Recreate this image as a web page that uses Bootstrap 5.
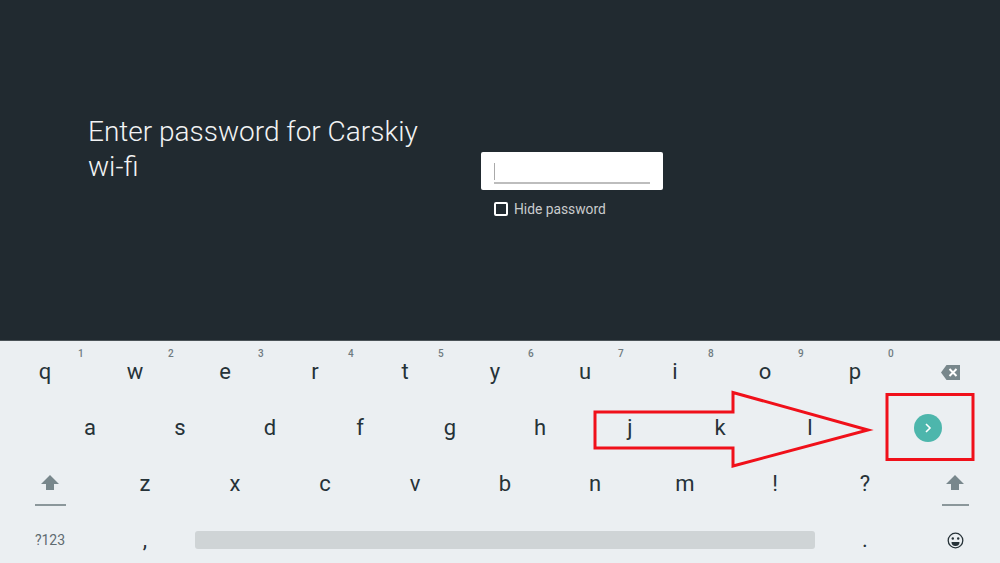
<!DOCTYPE html>
<html lang="en">
<head>
<meta charset="utf-8">
<title>Enter password</title>
<link rel="stylesheet" href="https://cdn.jsdelivr.net/npm/bootstrap@5.3.0/dist/css/bootstrap.min.css">
<style>
html,body{width:1000px;height:563px;overflow:hidden;background:#ebeff2;font-family:Roboto,"Liberation Sans",sans-serif}
.stage{height:563px;position:relative}
.upper{height:340px;background:#212a30;padding:114px 0 0 88px;gap:63px}
.prompt{width:330px;font-size:28px;font-weight:300;line-height:35px;color:#f2f3f4;margin:0;white-space:normal}
.entry-col{padding-top:38px;width:182px}
.entry{height:38px;background:#fff;border-radius:2px;padding:11px 13px 0}
.caret{width:1px;height:17px;background:#aaa}
.rule{height:2px;background:#bdbdbd;margin-top:2px}
.hide-row{padding:12px 0 0 13px;gap:6px;color:#c9cccd;font-size:13.8px;line-height:14px}
.tick{width:14px;height:14px;border:2px solid #fff;border-radius:2px;background:#212a30;flex:none}
.keyboard{height:223px;border-top:1px solid #4a5257;background:#ebeff2;padding-top:3px}
.keyrow{height:56px;color:#263238}
.cap{width:90px;font-size:22px;line-height:1;position:relative;flex:none}
.cap-wide{width:100px;flex:none}
.cap-go{width:145px;flex:none}
.offset{width:45px;flex:none}
.hint{position:absolute;left:78px;top:-13px;font-size:10px;line-height:12px;font-weight:500;color:#6f7b81}
.sym{font-size:14px;color:#5f6b71}
.shift-group{padding-top:13px}
.shift-line{width:31px;height:2px;background:#8b979b;margin-top:14px}
.shift-r{width:27px}
.spacebar{width:620px;height:18px;margin:0 5px;background:#cfd4d6;border-radius:3px;flex:none}
.go{width:28px;height:28px;border-radius:50%;background:#4db6ac}
.notes{position:absolute;left:0;top:0;pointer-events:none}
</style>
</head>
<body>
<div class="stage">
  <div class="upper d-flex align-items-start">
    <h1 class="prompt">Enter password for Carskiy wi-fi</h1>
    <div class="entry-col">
      <div class="entry"><div class="caret"></div><div class="rule"></div></div>
      <div class="hide-row d-flex align-items-center"><span class="tick"></span><span>Hide password</span></div>
    </div>
  </div>
  <div class="keyboard overflow-hidden">
    <div class="keyrow d-flex align-items-center">
      <div class="cap text-center">q<span class="hint">1</span></div>
      <div class="cap text-center">w<span class="hint">2</span></div>
      <div class="cap text-center">e<span class="hint">3</span></div>
      <div class="cap text-center">r<span class="hint">4</span></div>
      <div class="cap text-center">t<span class="hint">5</span></div>
      <div class="cap text-center">y<span class="hint">6</span></div>
      <div class="cap text-center">u<span class="hint">7</span></div>
      <div class="cap text-center">i<span class="hint">8</span></div>
      <div class="cap text-center">o<span class="hint">9</span></div>
      <div class="cap text-center">p<span class="hint">0</span></div>
      <div class="cap-wide d-flex justify-content-center">
        <svg width="19" height="15" viewBox="0 0 19 15"><path d="M5.500 0H19v15H5.500L0 7.500z" fill="#78878c"/><path d="M8.500 4l7 7m0-7l-7 7" stroke="#fff" stroke-width="2"/></svg>
      </div>
    </div>
    <div class="keyrow d-flex align-items-center">
      <div class="offset"></div>
      <div class="cap text-center">a</div>
      <div class="cap text-center">s</div>
      <div class="cap text-center">d</div>
      <div class="cap text-center">f</div>
      <div class="cap text-center">g</div>
      <div class="cap text-center">h</div>
      <div class="cap text-center">j</div>
      <div class="cap text-center">k</div>
      <div class="cap text-center">l</div>
      <div class="cap-go d-flex justify-content-center">
        <div class="go d-flex align-items-center justify-content-center">
          <svg width="8" height="10" viewBox="0 0 8 10"><path d="M2 1l4 4-4 4" fill="none" stroke="#fff" stroke-width="1.600"/></svg>
        </div>
      </div>
    </div>
    <div class="keyrow d-flex align-items-center">
      <div class="cap-wide shift-group d-flex flex-column align-items-center">
        <svg width="18" height="15" viewBox="0 0 18 15"><path d="M9 0l9 9h-5v6H5V9H0z" fill="#78878c"/></svg>
        <div class="shift-line"></div>
      </div>
      <div class="cap text-center">z</div>
      <div class="cap text-center">x</div>
      <div class="cap text-center">c</div>
      <div class="cap text-center">v</div>
      <div class="cap text-center">b</div>
      <div class="cap text-center">n</div>
      <div class="cap text-center">m</div>
      <div class="cap text-center">!</div>
      <div class="cap text-center">?</div>
      <div class="cap shift-group d-flex flex-column align-items-center">
        <svg width="18" height="15" viewBox="0 0 18 15"><path d="M9 0l9 9h-5v6H5V9H0z" fill="#78878c"/></svg>
        <div class="shift-line shift-r"></div>
      </div>
    </div>
    <div class="keyrow d-flex align-items-center">
      <div class="cap-wide text-center sym">?123</div>
      <div class="cap text-center">,</div>
      <div class="spacebar"></div>
      <div class="cap text-center">.</div>
      <div class="cap d-flex justify-content-center">
        <svg width="17" height="17" viewBox="0 0 17 17"><circle cx="8.500" cy="8.500" r="7.300" fill="none" stroke="#263238" stroke-width="1.300"/><circle cx="5.800" cy="6.500" r="1.200" fill="#263238"/><circle cx="11.200" cy="6.500" r="1.200" fill="#263238"/><path d="M4.500 10h8a4 4 0 0 1-8 0z" fill="#263238"/></svg>
      </div>
    </div>
  </div>
  <svg class="notes" width="1000" height="563" viewBox="0 0 1000 563">
    <polygon points="595,412 733,412 733,392.500 868,430 733,466 733,448 595,448" fill="none" stroke="#f0101a" stroke-width="3"/>
    <rect x="887" y="394.500" width="86" height="65" fill="none" stroke="#f0101a" stroke-width="3"/>
  </svg>
</div>
</body>
</html>
